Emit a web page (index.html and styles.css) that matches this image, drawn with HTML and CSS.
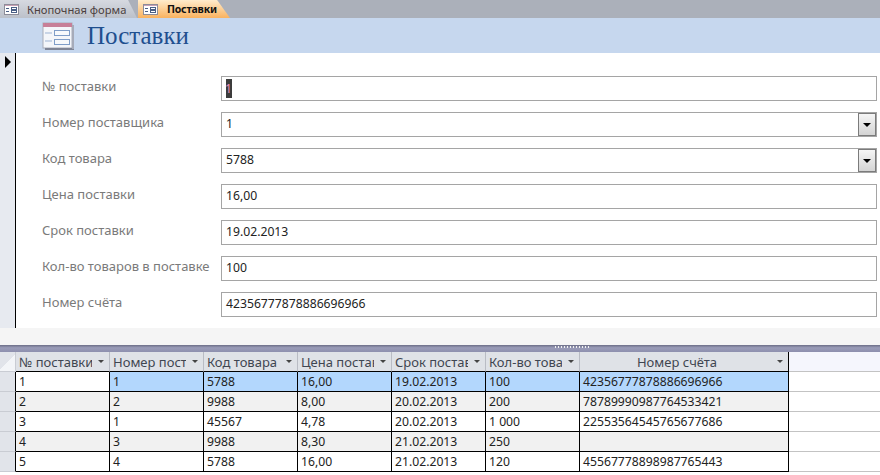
FILE: index.html
```html
<!DOCTYPE html>
<html lang="ru">
<head>
  <meta charset="UTF-8" />
  <title>Поставки</title>
  <link rel="stylesheet" href="styles.css">
</head>
<body>
  <svg width="0" height="0" class="defs">
    <symbol id="form-icon" viewBox="0 0 15 11">
      <rect x="0.5" y="0.5" width="14" height="10" fill="#fff" stroke="#8d8d99"/>
      <rect x="1" y="1" width="13" height="1" fill="#c9a0b4"/>
      <path d="M2 4.5h3M2 7.5h3" stroke="#4a5f85"/>
      <rect x="7.5" y="3.5" width="5" height="2" fill="#fff" stroke="#4a5f85"/>
      <rect x="7.5" y="6.5" width="5" height="2" fill="#fff" stroke="#4a5f85"/>
    </symbol>
  </svg>

  <div class="tabs">
    <div class="tab">
      <svg class="tab-icon"><use href="#form-icon"/></svg>
      <span>Кнопочная форма</span>
    </div>
    <div class="tab active">
      <svg class="tab-icon"><use href="#form-icon"/></svg>
      <span>Поставки</span>
    </div>
  </div>

  <div class="form-header">
    <svg class="header-icon" viewBox="0 0 32 28">
      <rect x="1" y="1" width="29" height="25" fill="#f4f6fa" stroke="#a9adb8"/>
      <rect x="1" y="1" width="29" height="4" fill="#c77f98"/>
      <rect x="3" y="26" width="29" height="2" fill="#7f8596"/>
      <rect x="30" y="3" width="2" height="24" fill="#a6abb9"/>
      <path d="M3 11h7M3 19h7" stroke="#9db3d3"/>
      <rect x="12.5" y="8.5" width="15" height="5" fill="#f7f9fc" stroke="#7f9dc8"/>
      <rect x="12.5" y="17.5" width="15" height="5" fill="#f7f9fc" stroke="#7f9dc8"/>
    </svg>
    <h1>Поставки</h1>
  </div>

  <div class="form-body">
    <div class="selector"><span class="arrow"></span></div>
    <div class="fields">
      <div class="field">
        <label>№ поставки</label>
        <div class="box"><span class="caret">1</span></div>
      </div>
      <div class="field">
        <label>Номер поставщика</label>
        <div class="box"><span class="val">1</span><span class="drop"><i></i></span></div>
      </div>
      <div class="field">
        <label>Код товара</label>
        <div class="box"><span class="val">5788</span><span class="drop"><i></i></span></div>
      </div>
      <div class="field">
        <label>Цена поставки</label>
        <div class="box"><span class="val">16,00</span></div>
      </div>
      <div class="field">
        <label>Срок поставки</label>
        <div class="box"><span class="val">19.02.2013</span></div>
      </div>
      <div class="field">
        <label>Кол-во товаров в поставке</label>
        <div class="box"><span class="val">100</span></div>
      </div>
      <div class="field">
        <label>Номер счёта</label>
        <div class="box"><span class="val">42356777878886696966</span></div>
      </div>
    </div>
  </div>

  <div class="form-footer"></div>
  <div class="splitter"><span class="grip"></span></div>

  <div class="sheet">
    <div class="row head">
      <div class="sel corner"></div>
      <div class="cell"><span>№ поставки</span><i></i></div>
      <div class="cell"><span>Номер пост</span><i></i></div>
      <div class="cell"><span>Код товара</span><i></i></div>
      <div class="cell"><span>Цена постав</span><i></i></div>
      <div class="cell"><span>Срок постав</span><i></i></div>
      <div class="cell"><span>Кол-во това</span><i></i></div>
      <div class="cell wide"><span>Номер счёта</span><i></i></div>
    </div>
    <div class="row current">
      <div class="sel"></div>
      <div class="cell first">1</div><div class="cell">1</div><div class="cell">5788</div><div class="cell">16,00</div>
      <div class="cell">19.02.2013</div><div class="cell">100</div><div class="cell wide">42356777878886696966</div>
    </div>
    <div class="row alt">
      <div class="sel"></div>
      <div class="cell">2</div><div class="cell">2</div><div class="cell">9988</div><div class="cell">8,00</div>
      <div class="cell">20.02.2013</div><div class="cell">200</div><div class="cell wide">78789990987764533421</div>
    </div>
    <div class="row">
      <div class="sel"></div>
      <div class="cell">3</div><div class="cell">1</div><div class="cell">45567</div><div class="cell">4,78</div>
      <div class="cell">20.02.2013</div><div class="cell">1 000</div><div class="cell wide">22553564545765677686</div>
    </div>
    <div class="row alt">
      <div class="sel"></div>
      <div class="cell">4</div><div class="cell">3</div><div class="cell">9988</div><div class="cell">8,30</div>
      <div class="cell">21.02.2013</div><div class="cell">250</div><div class="cell wide"></div>
    </div>
    <div class="row">
      <div class="sel"></div>
      <div class="cell">5</div><div class="cell">4</div><div class="cell">5788</div><div class="cell">16,00</div>
      <div class="cell">21.02.2013</div><div class="cell">120</div><div class="cell wide">45567778898987765443</div>
    </div>
  </div>
</body>
</html>
```

FILE: styles.css
```css
html, body {
  margin: 0;
  height: 475px;
  overflow: hidden;
}

body {
  font-family: "Noto Sans", "Open Sans", sans-serif;
  font-size: 12.2px;
  color: #222;
  background: #fff;
}

.defs {
  display: block;
  height: 0;
}

.tabs {
  display: flex;
  height: 18px;
  background: #abb0ba;
}

.tab {
  display: flex;
  align-items: center;
  gap: 8px;
  box-sizing: border-box;
  width: 137px;
  padding-left: 4px;
  font-size: 11.2px;
  color: #4b3f3f;
  background: linear-gradient(#d6d9e0, #bcc1ca);
  clip-path: polygon(0 0, 93.5% 0, 100% 100%, 0 100%);
}

.tab.active {
  width: 92px;
  margin-left: 1px;
  padding-left: 5px;
  gap: 9px;
  font-size: 10.5px;
  font-weight: 700;
  letter-spacing: -0.2px;
  color: #111;
  background: linear-gradient(#ffeccc, #f9b25f);
  clip-path: polygon(0 0, 86% 0, 100% 100%, 0 100%);
}

.tab-icon {
  width: 15px;
  height: 11px;
  flex: none;
}

.form-header {
  display: flex;
  align-items: center;
  gap: 13px;
  height: 35px;
  padding-left: 42px;
  background: #c6d7ee;
}

.header-icon {
  width: 32px;
  height: 28px;
}

h1 {
  margin: 0;
  font-family: "Liberation Serif", "DejaVu Serif", serif;
  font-size: 25px;
  font-weight: 400;
  color: #1f4f8f;
}

.form-body {
  display: flex;
  height: 275px;
}

.selector {
  width: 15px;
  background: #e7eaf0;
  border-right: 1px solid #000;
}

.arrow {
  display: block;
  width: 0;
  height: 0;
  margin: 3px 0 0 5px;
  border-left: 6px solid #000;
  border-top: 6px solid transparent;
  border-bottom: 6px solid transparent;
}

.fields {
  flex: 1;
  display: flex;
  flex-direction: column;
  gap: 11px;
  padding: 23px 3px 0 26px;
}

.field {
  display: flex;
  align-items: center;
  height: 25px;
}

.field label {
  width: 179px;
  margin-top: -5px;
  font-size: 13px;
  color: #7a7a7a;
  white-space: nowrap;
}

.box {
  flex: 1;
  display: flex;
  align-items: center;
  justify-content: space-between;
  box-sizing: border-box;
  height: 25px;
  padding-left: 4px;
  border: 1px solid #a5a5a5;
  color: #222;
}

.val {
  margin-top: -2px;
}

.caret {
  width: 6px;
  height: 19px;
  line-height: 19px;
  text-indent: -1px;
  color: #ee8fb8;
  background: #3c3c3c;
}

.drop {
  display: flex;
  align-items: center;
  justify-content: center;
  box-sizing: border-box;
  width: 18px;
  height: 23px;
  background: linear-gradient(#f5f5f5, #d4d4d4);
  border: 1px solid #7b7b7b;
}

.drop i {
  width: 0;
  height: 0;
  border-left: 4px solid transparent;
  border-right: 4px solid transparent;
  border-top: 4px solid #000;
}

.form-footer {
  height: 17px;
  background: #f5f5f5;
}

.splitter {
  box-sizing: border-box;
  height: 7px;
  padding: 1px 0 0 555px;
  background: linear-gradient(#6c6e87, #9a9cb8 40%, #8d8fae);
}

.grip {
  display: block;
  width: 35px;
  height: 2px;
  background: repeating-linear-gradient(90deg, #f2f2f2 0 1px, transparent 1px 3px);
}

.sheet {
  background: #fff;
}

.row {
  display: flex;
  height: 20px;
  box-sizing: border-box;
  border-bottom: 1px solid #c3c3c3;
}

.row.head {
  background: #f5f6fd;
}

.sel {
  width: 15px;
  flex: none;
  background: #e1e4ea;
  border-right: 1px solid #000;
  border-bottom: 1px solid #c9ccd3;
  margin-bottom: -1px;
}

.corner {
  background: linear-gradient(135deg, #e1e4ea 50%, #f3f5f8 50%);
  border-right-color: #c9ccd3;
}

.cell {
  display: flex;
  align-items: center;
  justify-content: space-between;
  box-sizing: border-box;
  width: 94px;
  margin-bottom: -1px;
  padding: 0 3px;
  white-space: nowrap;
  overflow: hidden;
  border-right: 1px solid #000;
  border-bottom: 1px solid #000;
}

.cell.wide {
  width: 209px;
}

.row.alt .cell {
  background: #f1f1f1;
}

.row.current .cell {
  background: #b3d7fd;
}

.row.current .cell.first {
  background: #fff;
}

.head .cell {
  position: relative;
  font-size: 13px;
  background: #dfe2e7;
  color: #3f4651;
  border-right: 1px solid #b9bcc4;
  border-bottom: 1px solid #000;
}

.head .cell span {
  overflow: hidden;
  max-width: 73px;
}

.head .cell.wide {
  justify-content: center;
  padding-right: 17px;
  border-right: 1px solid #000;
}

.head .cell.wide span {
  max-width: none;
}

.head .cell i {
  position: absolute;
  right: 5px;
  top: 8px;
  width: 0;
  height: 0;
  border-left: 3px solid transparent;
  border-right: 3px solid transparent;
  border-top: 3px solid #444;
}
```
